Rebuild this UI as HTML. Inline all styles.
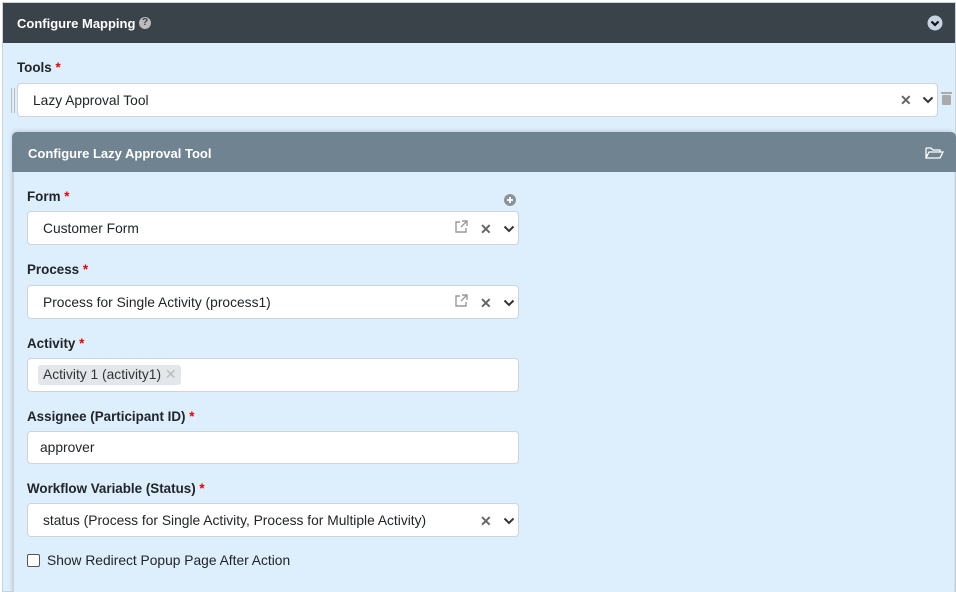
<!DOCTYPE html>
<html><head><style>
*{box-sizing:border-box;margin:0;padding:0}
body{width:956px;height:586px;overflow:hidden;background:#fff;font-family:"Liberation Sans",sans-serif;font-size:13.8px;color:#212529;position:relative}
.outer{position:absolute;left:2px;top:2px;width:954px;height:590px;background:#ddeefc;border:1px solid #c8d3dc}
.hd{position:absolute;left:0;top:0;width:100%;height:40px;background:#394349;color:#fff;font-weight:bold;font-size:13px;padding:13px 14px}
.a{position:absolute}
.lbl{position:absolute;font-weight:bold;font-size:13.4px}
.lbl i{color:#e00;font-style:normal}
.inp{position:absolute;background:#fff;border:1px solid #ced4da;border-radius:4px;font-size:13.8px;padding:0 15px;display:flex;align-items:center}
.x{position:absolute;color:#666;font-weight:bold;font-size:14px}
.inner{position:absolute;left:12px;top:132px;width:942px;height:460px;background:#ddeefc;border-left:2px solid #c9d4de;border-radius:5px 5px 0 0;box-shadow:0 -1px 4px rgba(0,0,0,.15)}
.ih{position:absolute;left:-2px;top:0;width:944px;height:40px;background:#6f8391;border-radius:5px 5px 0 0;color:#fff;font-weight:bold;padding:14px 16px;font-size:13px}
</style></head><body>
<div class="outer">
<div class="hd">Configure Mapping <span style="display:inline-block;width:12px;height:12px;border-radius:50%;background:#bbb;color:#394349;font-size:10px;text-align:center;line-height:12px;vertical-align:middle;position:relative;top:-2px">?</span></div>
<svg class="a" style="left:924px;top:12px" width="16" height="16"><circle cx="8" cy="8" r="7.5" fill="#c7d3e0"/><path d="M4.5 6.5L8 10 11.5 6.5" stroke="#111" stroke-width="2.2" fill="none"/></svg>
</div>
<div class="lbl" style="left:17px;top:60px">Tools <i>*</i></div>
<div class="a" style="left:11px;top:88px;width:4px;height:25px;border-left:1px solid #bbb;border-right:1px solid #bbb"></div>
<div class="inp" style="left:17px;top:83px;width:921px;height:34px">Lazy Approval Tool</div>
<div class="x" style="left:900px;top:92px">✕</div>
<svg class="a" style="left:922px;top:96px" width="12" height="8"><path d="M1.5 1.5L6 6 10.5 1.5" stroke="#333" stroke-width="2" fill="none"/></svg>
<svg class="a" style="left:940px;top:91px" width="13" height="14"><rect x="1" y="1" width="11" height="2" fill="#aaa"/><rect x="2" y="4" width="9" height="10" rx="1" fill="#aaa"/></svg>
<div class="inner">
<div class="ih">Configure Lazy Approval Tool</div>
<svg class="a" style="left:911px;top:14px" width="19" height="14"><path d="M1 2h5l2 2h7v2M1 2v10h14l3-6H4L1 12" stroke="#fff" stroke-width="1.3" fill="none"/></svg>
</div>
<div class="lbl" style="left:27px;top:189px">Form <i>*</i></div>
<svg class="a" style="left:504px;top:194px" width="12" height="12"><circle cx="6" cy="6" r="6" fill="#8a949c"/><path d="M6 3v6M3 6h6" stroke="#fff" stroke-width="1.8"/></svg>
<div class="inp" style="left:27px;top:211px;width:492px;height:34px">Customer Form</div>
<div class="lbl" style="left:27px;top:262px">Process <i>*</i></div>
<div class="inp" style="left:27px;top:285px;width:492px;height:34px">Process for Single Activity (process1)</div>
<div class="lbl" style="left:27px;top:336px">Activity <i>*</i></div>
<div class="inp" style="left:27px;top:358px;width:492px;height:34px;padding-left:10px"><span style="background:#e3e7eb;border-radius:3px;padding:2px 5px;color:#333">Activity 1 (activity1) <span style="color:#bbb">✕</span></span></div>
<div class="lbl" style="left:27px;top:409px">Assignee (Participant ID) <i>*</i></div>
<div class="inp" style="left:27px;top:431px;width:492px;height:33px;padding-left:12px">approver</div>
<div class="lbl" style="left:27px;top:481px">Workflow Variable (Status) <i>*</i></div>
<div class="inp" style="left:27px;top:503px;width:492px;height:34px">status (Process for Single Activity, Process for Multiple Activity)</div>
<svg class="a" style="left:454px;top:220px" width="14" height="14"><path d="M6 2H2v10h10V8M8 1h5v5M13 1L7 7" stroke="#999" stroke-width="1.4" fill="none"/></svg>
<svg class="a" style="left:454px;top:294px" width="14" height="14"><path d="M6 2H2v10h10V8M8 1h5v5M13 1L7 7" stroke="#999" stroke-width="1.4" fill="none"/></svg>
<div class="x" style="left:480px;top:221px">✕</div>
<div class="x" style="left:480px;top:295px">✕</div>
<div class="x" style="left:480px;top:513px">✕</div>
<svg class="a" style="left:503px;top:225px" width="12" height="8"><path d="M1.5 1.5L6 6 10.5 1.5" stroke="#333" stroke-width="2" fill="none"/></svg>
<svg class="a" style="left:503px;top:299px" width="12" height="8"><path d="M1.5 1.5L6 6 10.5 1.5" stroke="#333" stroke-width="2" fill="none"/></svg>
<svg class="a" style="left:503px;top:517px" width="12" height="8"><path d="M1.5 1.5L6 6 10.5 1.5" stroke="#333" stroke-width="2" fill="none"/></svg>
<div class="a" style="left:27px;top:554px;width:13px;height:13px;border:1px solid #555;border-radius:2px;background:#fff"></div>
<div class="a" style="left:47px;top:553px">Show Redirect Popup Page After Action</div>
</body></html>
